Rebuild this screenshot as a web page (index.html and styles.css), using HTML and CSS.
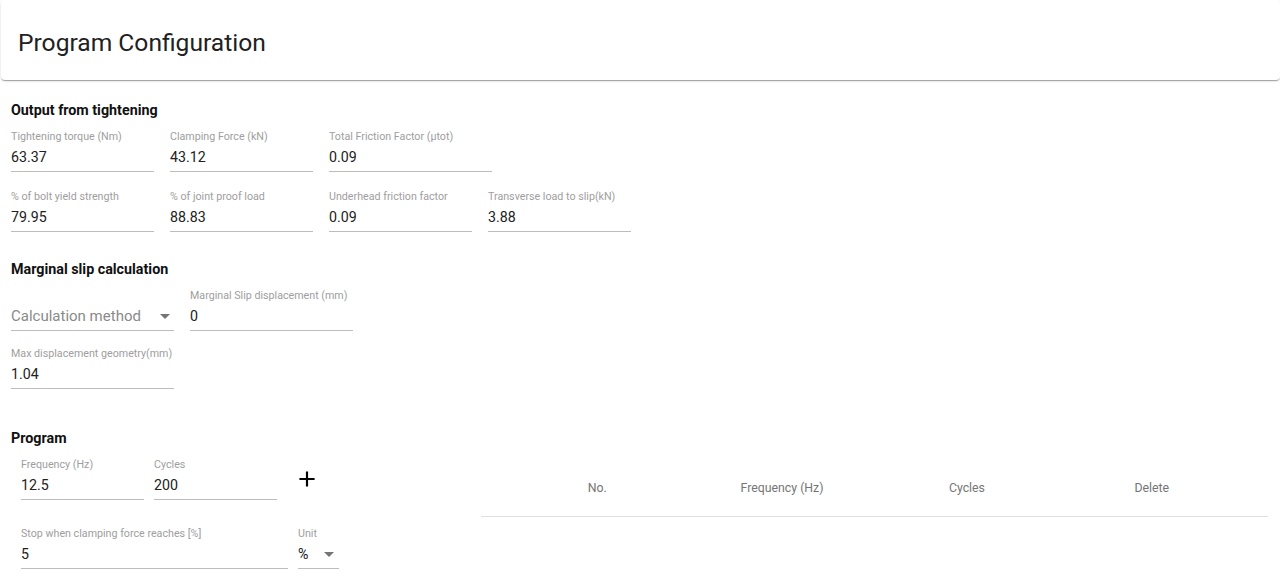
FILE: index.html
```html
<!DOCTYPE html>
<html>

<head>
  <title>Program Configuration</title>
  <meta name="viewport" content="width=device-width, initial-scale=1.0">
  <link rel="stylesheet" href="styles.css">
</head>

<body>
  <header class="toolbar">
    <h1>Program Configuration</h1>
  </header>

  <main class="content">
    <section class="group group-output">
      <h2>Output from tightening</h2>
      <div class="row">
        <div class="field">
          <label>Tightening torque (Nm)</label>
          <input type="text" value="63.37" readonly>
        </div>
        <div class="field">
          <label>Clamping Force (kN)</label>
          <input type="text" value="43.12" readonly>
        </div>
        <div class="field field-wide">
          <label>Total Friction Factor (µtot)</label>
          <input type="text" value="0.09" readonly>
        </div>
      </div>
      <div class="row">
        <div class="field">
          <label>% of bolt yield strength</label>
          <input type="text" value="79.95" readonly>
        </div>
        <div class="field">
          <label>% of joint proof load</label>
          <input type="text" value="88.83" readonly>
        </div>
        <div class="field">
          <label>Underhead friction factor</label>
          <input type="text" value="0.09" readonly>
        </div>
        <div class="field">
          <label>Transverse load to slip(kN)</label>
          <input type="text" value="3.88" readonly>
        </div>
      </div>
    </section>

    <section class="group group-slip">
      <h2>Marginal slip calculation</h2>
      <div class="row row-bottom">
        <div class="select select-method">
          <span class="placeholder">Calculation method</span>
          <span class="arrow"></span>
        </div>
        <div class="field field-wide">
          <label>Marginal Slip displacement (mm)</label>
          <input type="text" value="0">
        </div>
      </div>
      <div class="row">
        <div class="field field-wide">
          <label>Max displacement geometry(mm)</label>
          <input type="text" value="1.04" readonly>
        </div>
      </div>
    </section>

    <section class="group group-program">
      <h2>Program</h2>
      <div class="program-body">
        <div class="program-form">
          <div class="row row-tight">
            <div class="field field-freq">
              <label>Frequency (Hz)</label>
              <input type="text" value="12.5">
            </div>
            <div class="field field-freq">
              <label>Cycles</label>
              <input type="text" value="200">
            </div>
            <button class="icon-button" type="button" title="Add">
              <svg width="26" height="26" viewBox="0 0 24 24"><path d="M19 13h-6v6h-2v-6H5v-2h6V5h2v6h6v2z" fill="#000"/></svg>
            </button>
          </div>
          <div class="row row-tight">
            <div class="field field-stop">
              <label>Stop when clamping force reaches [%]</label>
              <input type="text" value="5">
            </div>
            <div class="field field-unit">
              <label>Unit</label>
              <div class="unit-value">
                <span>%</span>
                <span class="arrow"></span>
              </div>
            </div>
          </div>
        </div>

        <div class="steps">
          <table>
            <thead>
              <tr>
                <th class="col-edge">No.</th>
                <th>Frequency (Hz)</th>
                <th>Cycles</th>
                <th class="col-edge">Delete</th>
              </tr>
            </thead>
            <tbody></tbody>
          </table>
        </div>
      </div>
    </section>
  </main>
</body>

</html>
```

FILE: styles.css
```css
body {
  font-family: Roboto, "Noto Sans", Arial, sans-serif;
  margin: 0;
  padding: 0;
  color: rgba(0, 0, 0, 0.87);
  background: #fff;
}

/* header card */
.toolbar {
  height: 80px;
  box-sizing: border-box;
  margin-left: 1px;
  padding: 27px 17px 0;
  border-radius: 4px;
  box-shadow: 0 2px 1px -1px rgba(0, 0, 0, 0.2), 0 1px 1px 0 rgba(0, 0, 0, 0.14), 0 1px 3px 0 rgba(0, 0, 0, 0.12);
}

.toolbar h1 {
  margin: 0;
  font-size: 24.6px;
  line-height: 32px;
  font-weight: 400;
  color: #212121;
}

.content {
  padding: 20px 12px 0 11px;
}

h2 {
  margin: 0 0 11px;
  font-size: 14.3px;
  line-height: 20px;
  font-weight: 700;
  color: #111;
}

.row {
  display: flex;
  gap: 16px;
}

.row-bottom {
  align-items: flex-end;
}

.group-output .row + .row {
  margin-top: 19px;
}

.group-slip {
  margin-top: 27px;
}

.group-slip h2 {
  margin-bottom: 11px;
}

.group-slip .row + .row {
  margin-top: 17px;
}

.group-program {
  margin-top: 39px;
}

.group-program h2 {
  margin-bottom: 11px;
}

/* form fields */
.field {
  display: flex;
  flex-direction: column;
  width: 143px;
  padding-bottom: 4px;
  border-bottom: 1px solid #bdbdbd;
}

.field-wide {
  width: 163px;
}

.field label {
  font-size: 10.7px;
  line-height: 12px;
  color: #9e9e9e;
  white-space: nowrap;
}

.field input {
  margin-top: 4px;
  padding: 0;
  border: none;
  outline: none;
  width: 100%;
  font-family: inherit;
  font-size: 14.2px;
  line-height: 20px;
  height: 20px;
  color: #212121;
  background: transparent;
}

.select {
  display: flex;
  align-items: center;
  justify-content: space-between;
  padding-bottom: 4px;
  border-bottom: 1px solid #bdbdbd;
}

.select-method {
  width: 163px;
}

.placeholder {
  font-size: 15px;
  line-height: 20px;
  color: #8a8a8a;
}

.arrow {
  width: 0;
  height: 0;
  margin-right: 4px;
  border-left: 5px solid transparent;
  border-right: 5px solid transparent;
  border-top: 5px solid #757575;
}

/* program section */
.program-body {
  display: flex;
  align-items: flex-start;
}

.program-form {
  width: 470px;
  flex-shrink: 0;
  box-sizing: border-box;
  padding-left: 10px;
}

.row-tight {
  gap: 10px;
}

.row-tight + .row-tight {
  margin-top: 28px;
}

.field-freq {
  width: 123px;
}

.field-stop {
  width: 267px;
}

.field-unit {
  width: 41px;
}

.unit-value {
  display: flex;
  align-items: center;
  justify-content: space-between;
  margin-top: 4px;
  height: 20px;
  font-size: 14.2px;
  color: #212121;
}

.unit-value .arrow {
  margin-right: 5px;
}

.icon-button {
  width: 40px;
  height: 40px;
  padding: 7px;
  border: none;
  border-radius: 50%;
  background: transparent;
  cursor: pointer;
}

.icon-button svg {
  display: block;
}

.steps {
  flex: 1;
  margin-top: 1px;
}

.steps table {
  width: 100%;
  border-collapse: collapse;
}

.steps th {
  box-sizing: border-box;
  width: 23.5%;
  height: 56px;
  padding: 0;
  font-size: 12.3px;
  font-weight: 400;
  color: #757575;
  text-align: center;
  border-bottom: 1px solid #e0e0e0;
}

.steps th.col-edge {
  width: 26.5%;
}

.steps th:first-child {
  padding-left: 24px;
}

.steps th:last-child {
  padding-right: 24px;
}
```
